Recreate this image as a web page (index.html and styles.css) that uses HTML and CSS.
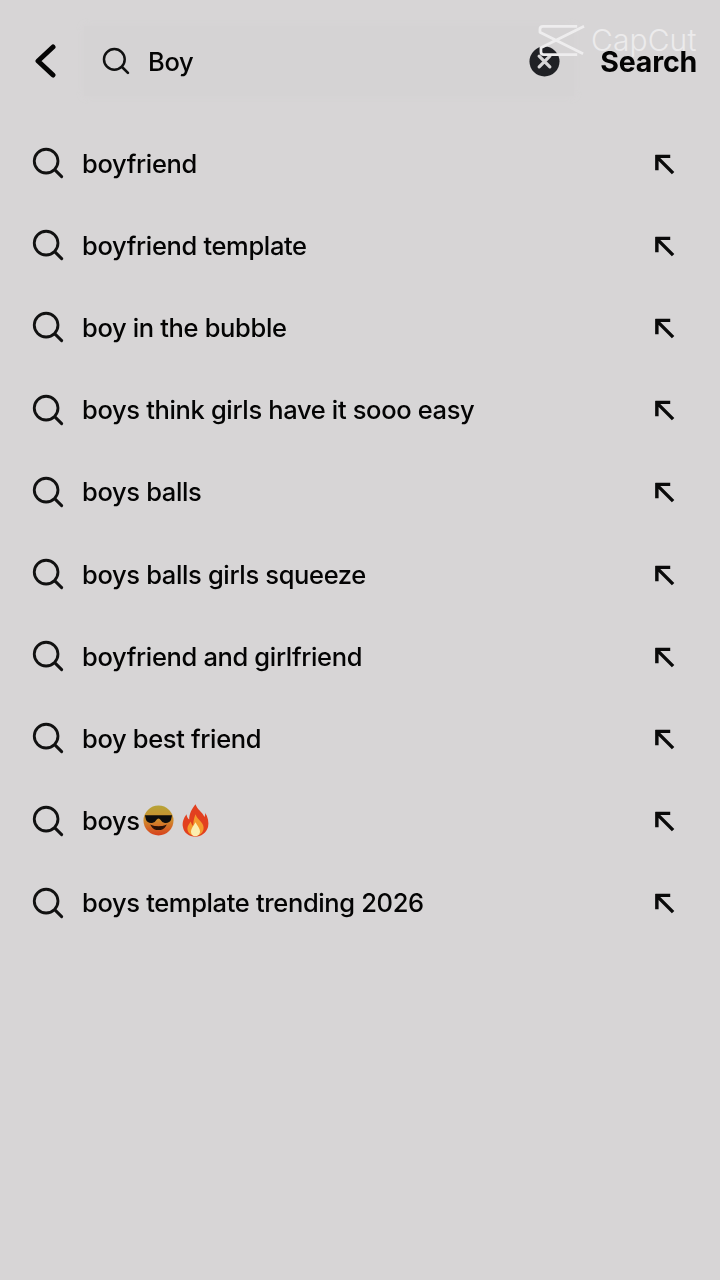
FILE: index.html
```html
<html lang="en">
<head>
    <meta charset="UTF-8">
    <title>Search</title>
    <link rel="stylesheet" href="styles.css">
</head>
<body>
    <svg class="defs" width="0" height="0">
        <symbol id="lens" viewBox="0 0 34 34">
            <circle cx="15" cy="15" r="12.6" fill="none" stroke="#111" stroke-width="3"/>
            <path d="M24.6 24.6L31.500 31.500" fill="none" stroke="#111" stroke-width="3.2" stroke-linecap="round"/>
        </symbol>
        <symbol id="fill" viewBox="0 0 22 22">
            <path d="M1.500 2.500H17M3 1V17M3.500 3.500L20 20" fill="none" stroke="#0a0a0a" stroke-width="3.600"/>
        </symbol>
    </svg>

    <div class="screen">
        <header class="topbar">
            <svg class="back" viewBox="0 0 22 34"><path d="M19 3L4 17L19 31" fill="none" stroke="#050505" stroke-width="5" stroke-linecap="round" stroke-linejoin="round"/></svg>
            <div class="searchbox">
                <svg class="lens-small"><use href="#lens"/></svg>
                <span class="query">Boy</span>
                <svg class="clear" viewBox="0 0 32 32">
                    <circle cx="16" cy="16" r="15.5" fill="#202125"/>
                    <path d="M10.500 10.500L21.500 21.500M21.500 10.500L10.500 21.500" stroke="#d6d5d6" stroke-width="3.400" stroke-linecap="round"/>
                </svg>
            </div>
            <span class="search-btn">Search</span>
        </header>

        <ul class="results">
            <li class="row"><svg class="lens"><use href="#lens"/></svg><span class="label">boyfriend</span><svg class="fill"><use href="#fill"/></svg></li>
            <li class="row"><svg class="lens"><use href="#lens"/></svg><span class="label">boyfriend template</span><svg class="fill"><use href="#fill"/></svg></li>
            <li class="row"><svg class="lens"><use href="#lens"/></svg><span class="label">boy in the bubble</span><svg class="fill"><use href="#fill"/></svg></li>
            <li class="row"><svg class="lens"><use href="#lens"/></svg><span class="label">boys think girls have it sooo easy</span><svg class="fill"><use href="#fill"/></svg></li>
            <li class="row"><svg class="lens"><use href="#lens"/></svg><span class="label">boys balls</span><svg class="fill"><use href="#fill"/></svg></li>
            <li class="row"><svg class="lens"><use href="#lens"/></svg><span class="label">boys balls girls squeeze</span><svg class="fill"><use href="#fill"/></svg></li>
            <li class="row"><svg class="lens"><use href="#lens"/></svg><span class="label">boyfriend and girlfriend</span><svg class="fill"><use href="#fill"/></svg></li>
            <li class="row"><svg class="lens"><use href="#lens"/></svg><span class="label">boy best friend</span><svg class="fill"><use href="#fill"/></svg></li>
            <li class="row">
                <svg class="lens"><use href="#lens"/></svg>
                <span class="label">boys</span>
                <svg class="emoji-face" viewBox="0 0 32 32">
                    <defs><linearGradient id="face" x1="0" y1="0" x2="0" y2="1"><stop offset="0" stop-color="#b5a438"/><stop offset="0.5" stop-color="#d08a2c"/><stop offset="1" stop-color="#d8401c"/></linearGradient></defs>
                    <circle cx="16" cy="16" r="15.500" fill="url(#face)"/>
                    <path d="M2 10.500H30L29 15C28 19 22 19.500 19.500 17C18 15 17 14 16 14C15 14 14 15 12.500 17C10 19.500 4 19 3 15Z" fill="#0d0d0d"/>
                    <path d="M9 21.500C12 26.500 20 26.500 23 21.500C20 23 12 23 9 21.500Z" fill="#2a1208" stroke="#2a1208" stroke-width="1.200"/>
                </svg>
                <svg class="emoji-fire" viewBox="0 0 30 36">
                    <path d="M15 0C17 6 22 8 25 14C26 11 26 10 25.500 9C29 14 30 20 29 25C27 32 21 36 15 36C8 36 2 32 1 25C0 20 2 15 5 11C5.500 14 6 15 8 17C8 10 11 5 15 0Z" fill="#e2401f"/>
                    <path d="M15 11C17 17 24 20 24 26C24 32 19 35 15 35C10 35 6 32 6 27C6 24 8 22 9.500 19C11 22 11 23 12.500 24C12.500 20 13 16 15 11Z" fill="#f49a2c"/>
                    <path d="M15 20C17 24 20 27 20 30C20 34 17 35.500 15 35.500C12 35.500 10 34 10 30C10 27 13 24 15 20Z" fill="#fbeeb0"/>
                </svg>
                <svg class="fill"><use href="#fill"/></svg>
            </li>
            <li class="row"><svg class="lens"><use href="#lens"/></svg><span class="label">boys template trending 2026</span><svg class="fill"><use href="#fill"/></svg></li>
        </ul>
    </div>

    <div class="watermark">
        <svg class="wm-logo" viewBox="0 0 50 34">
            <path d="M40 3H5Q2 3 2 6V9L46 31M47 3L3 25V29Q3 32 6 32H40" fill="none" stroke="#eeedee" stroke-width="2.800" stroke-linejoin="round"/>
        </svg>
        <span class="wm-text">CapCut</span>
    </div>
</body>
</html>
```

FILE: styles.css
```css
html, body {
    height: 100%;
}

body {
    margin: 0;
    background-color: #d7d5d6;
    font-family: Inter, "Liberation Sans", sans-serif;
    color: #040404;
    overflow: hidden;
}

.defs {
    display: block;
}

/* the reference is a video frame, everything is a little soft */
.screen {
    filter: blur(0.45px);
}

.topbar {
    display: flex;
    align-items: center;
    height: 70px;
    padding: 26px 23px 0 34px;
}

.back {
    width: 22px;
    height: 34px;
    flex: none;
}

.searchbox {
    display: flex;
    align-items: center;
    width: 490px;
    height: 70px;
    margin-left: 28px;
    padding: 0 14px 0 18px;
    box-sizing: border-box;
    background-color: #d5d3d4;
    box-shadow: 0 0 8px #d5d3d4;
    flex: none;
}

.lens-small {
    width: 28px;
    height: 28px;
    flex: none;
}

.query {
    margin-left: 18px;
    font-size: 25.5px;
    font-weight: 520;
    letter-spacing: -0.35px;
}

.clear {
    width: 31px;
    height: 31px;
    margin-left: auto;
    flex: none;
}

.search-btn {
    margin-left: auto;
    font-size: 28.5px;
    font-weight: 700;
    letter-spacing: -0.2px;
}

.results {
    list-style: none;
    margin: 26px 0 0;
    padding: 0 45px 0 32px;
}

.row {
    display: flex;
    align-items: center;
    height: 82.2px;
}

.lens {
    width: 32px;
    height: 32px;
    flex: none;
}

.label {
    margin-left: 18px;
    font-size: 25.5px;
    font-weight: 520;
    letter-spacing: -0.35px;
}

.fill {
    width: 21px;
    height: 21px;
    margin-left: auto;
    margin-top: 2px;
    flex: none;
}

.emoji-face {
    width: 31px;
    height: 31px;
    margin-left: 3px;
    flex: none;
}

.emoji-fire {
    width: 27px;
    height: 33px;
    margin-left: 8px;
    flex: none;
}

.watermark {
    position: absolute;
    top: 22px;
    left: 538px;
    display: flex;
    align-items: center;
    gap: 4px;
}

.wm-logo {
    width: 49px;
    height: 34px;
}

.wm-text {
    font-size: 30px;
    font-weight: 300;
    letter-spacing: 0.1px;
    color: #ecebec;
}
```
